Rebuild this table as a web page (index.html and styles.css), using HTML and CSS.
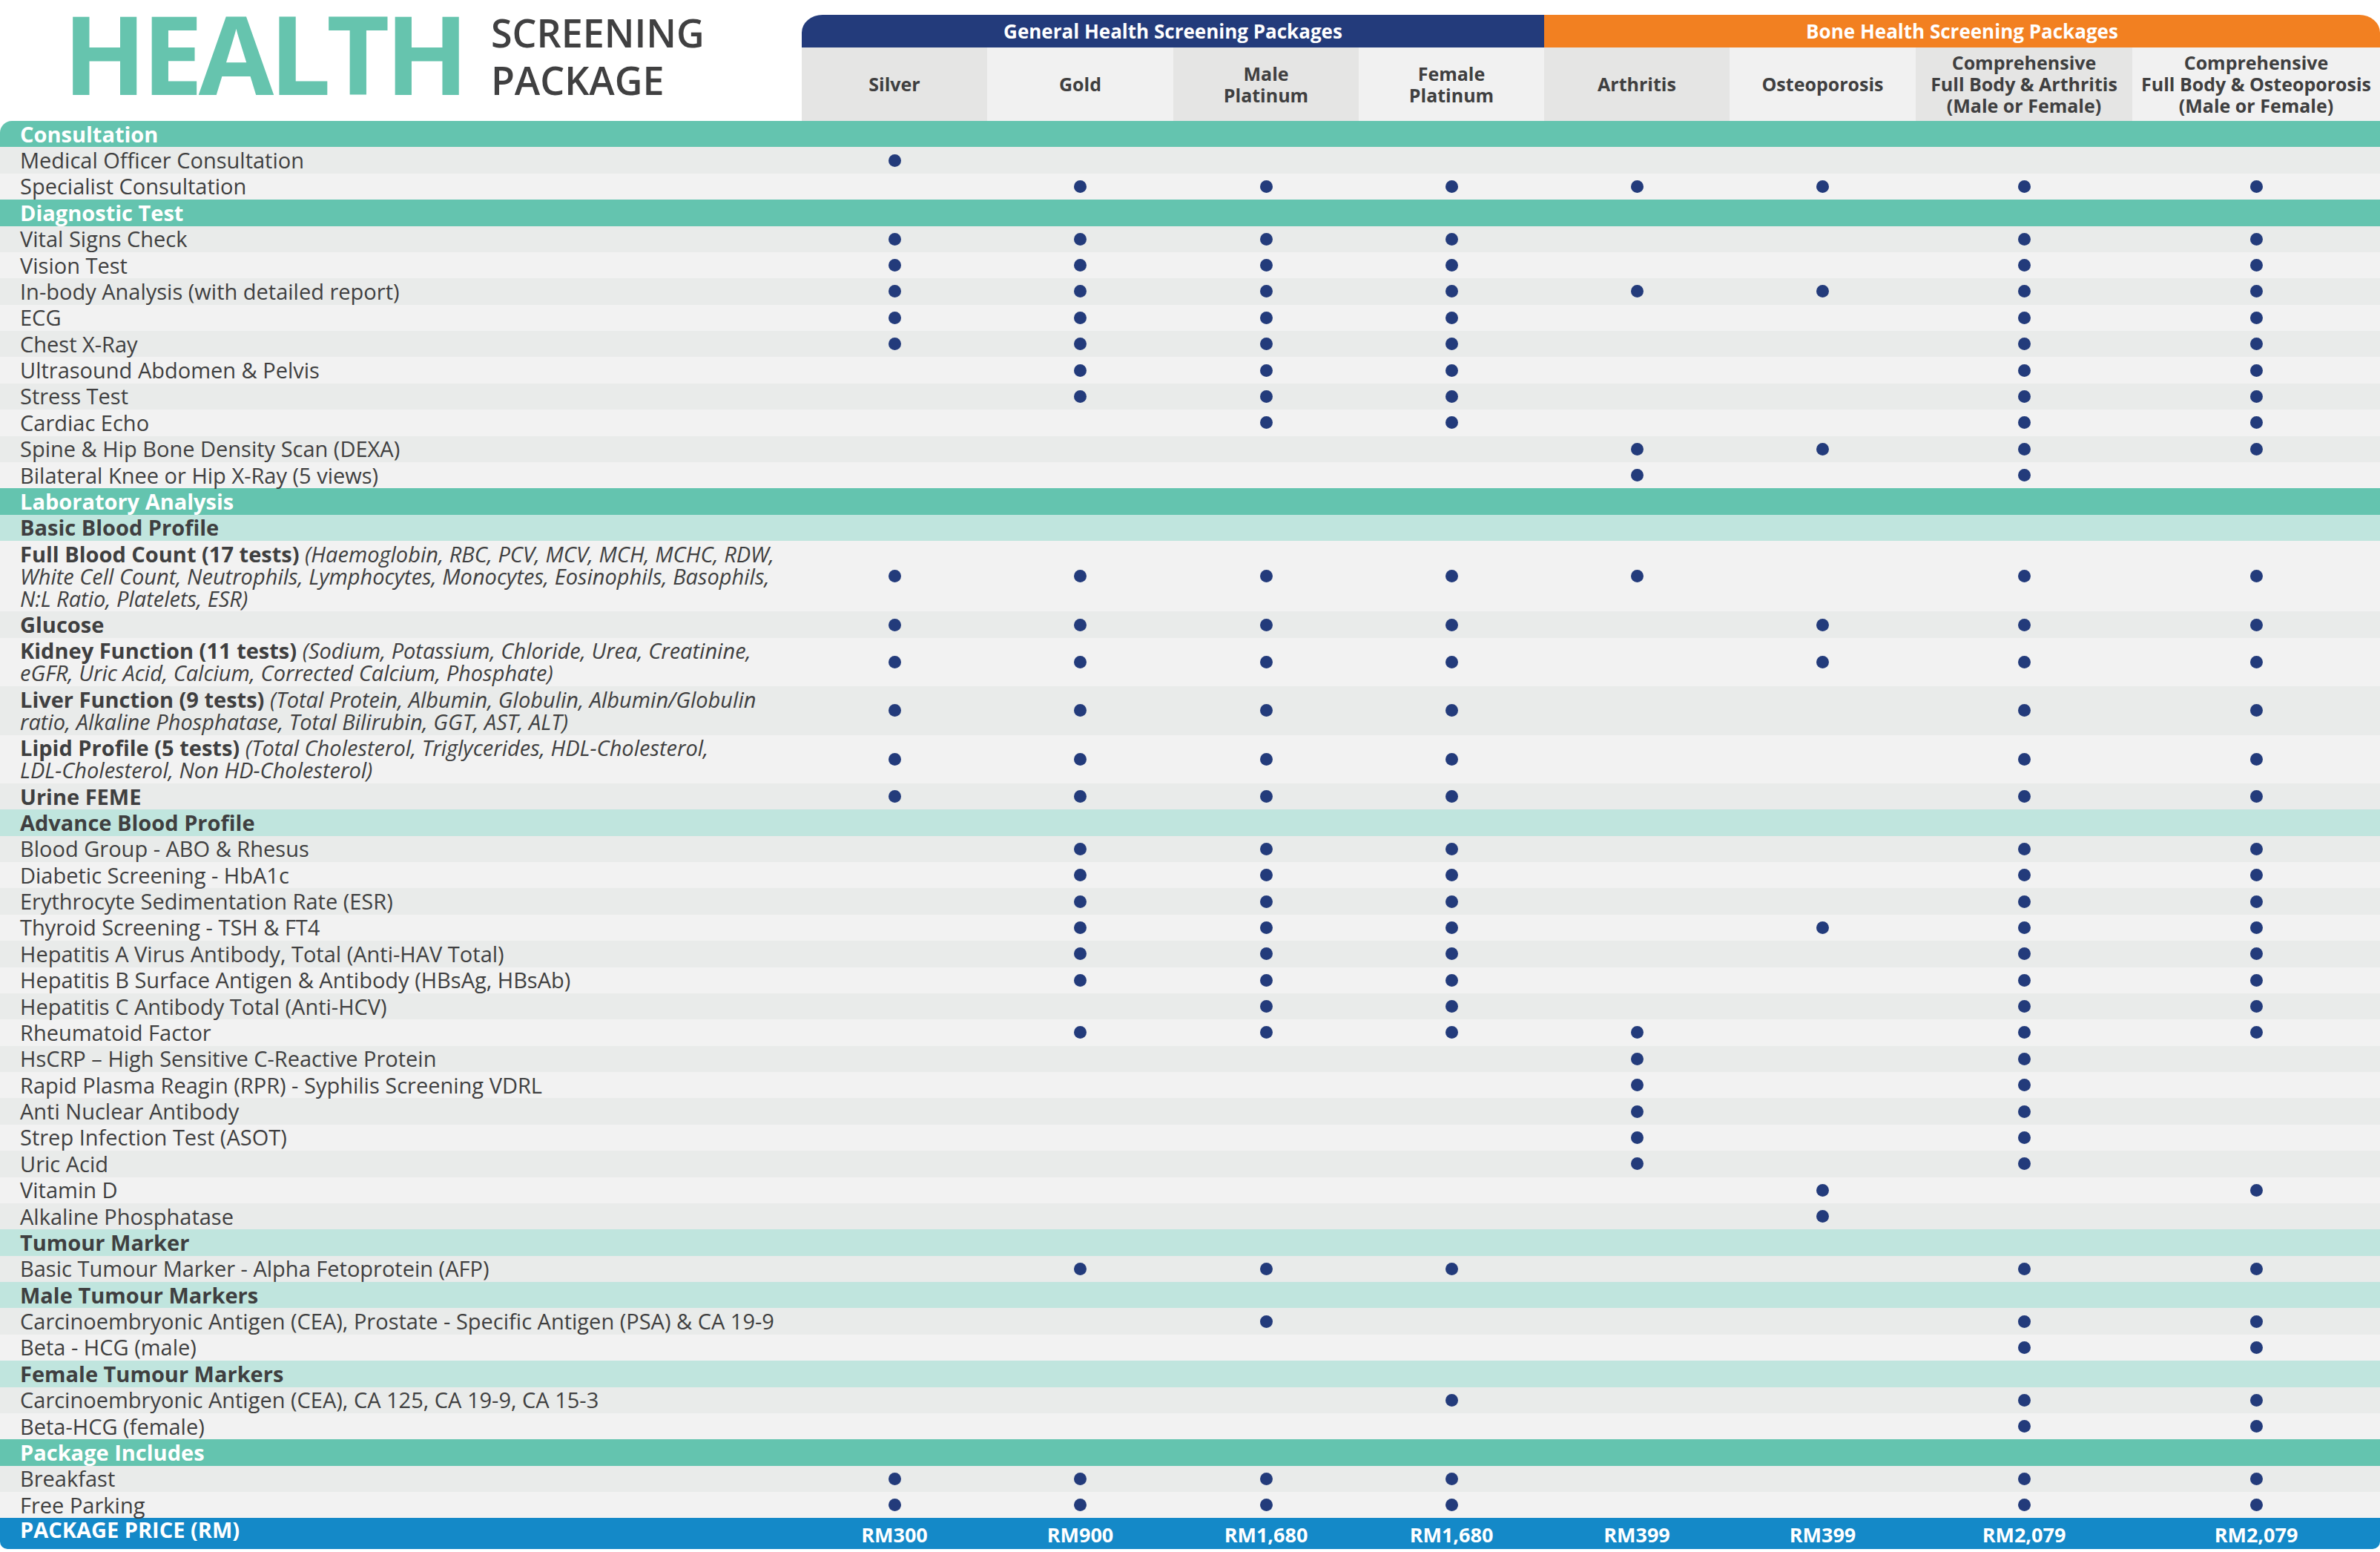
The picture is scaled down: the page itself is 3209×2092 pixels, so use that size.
FILE: index.html
```html
<!DOCTYPE html>
<html lang="en">
<head>
<meta charset="utf-8">
<title>Health Screening Package</title>
<link rel="stylesheet" href="styles.css">
</head>
<body>
<div class="sheet">
  <header class="top">
    <div class="title">
      <div class="big">HEALTH</div>
      <div class="small"><div>SCREENING</div><div>PACKAGE</div></div>
    </div>
    <div class="heads">
      <div class="grp general">General Health Screening Packages</div>
      <div class="grp bone">Bone Health Screening Packages</div>
      <div class="col g1">Silver</div>
      <div class="col g2">Gold</div>
      <div class="col g1"><div>Male</div><div>Platinum</div></div>
      <div class="col g2"><div>Female</div><div>Platinum</div></div>
      <div class="col g1">Arthritis</div>
      <div class="col g2">Osteoporosis</div>
      <div class="col g1"><div>Comprehensive</div><div>Full Body &amp; Arthritis</div><div>(Male or Female)</div></div>
      <div class="col g2"><div>Comprehensive</div><div>Full Body &amp; Osteoporosis</div><div>(Male or Female)</div></div>
    </div>
  </header>

  <div class="sec first">Consultation</div>
  <div class="row dk"><div class="lbl">Medical Officer Consultation</div><span><i></i></span><span></span><span></span><span></span><span></span><span></span><span></span><span></span></div>
  <div class="row lt"><div class="lbl">Specialist Consultation</div><span></span><span><i></i></span><span><i></i></span><span><i></i></span><span><i></i></span><span><i></i></span><span><i></i></span><span><i></i></span></div>

  <div class="sec">Diagnostic Test</div>
  <div class="row dk"><div class="lbl">Vital Signs Check</div><span><i></i></span><span><i></i></span><span><i></i></span><span><i></i></span><span></span><span></span><span><i></i></span><span><i></i></span></div>
  <div class="row lt"><div class="lbl">Vision Test</div><span><i></i></span><span><i></i></span><span><i></i></span><span><i></i></span><span></span><span></span><span><i></i></span><span><i></i></span></div>
  <div class="row dk"><div class="lbl">In-body Analysis (with detailed report)</div><span><i></i></span><span><i></i></span><span><i></i></span><span><i></i></span><span><i></i></span><span><i></i></span><span><i></i></span><span><i></i></span></div>
  <div class="row lt"><div class="lbl">ECG</div><span><i></i></span><span><i></i></span><span><i></i></span><span><i></i></span><span></span><span></span><span><i></i></span><span><i></i></span></div>
  <div class="row dk"><div class="lbl">Chest X-Ray</div><span><i></i></span><span><i></i></span><span><i></i></span><span><i></i></span><span></span><span></span><span><i></i></span><span><i></i></span></div>
  <div class="row lt"><div class="lbl">Ultrasound Abdomen &amp; Pelvis</div><span></span><span><i></i></span><span><i></i></span><span><i></i></span><span></span><span></span><span><i></i></span><span><i></i></span></div>
  <div class="row dk"><div class="lbl">Stress Test</div><span></span><span><i></i></span><span><i></i></span><span><i></i></span><span></span><span></span><span><i></i></span><span><i></i></span></div>
  <div class="row lt"><div class="lbl">Cardiac Echo</div><span></span><span></span><span><i></i></span><span><i></i></span><span></span><span></span><span><i></i></span><span><i></i></span></div>
  <div class="row dk"><div class="lbl">Spine &amp; Hip Bone Density Scan (DEXA)</div><span></span><span></span><span></span><span></span><span><i></i></span><span><i></i></span><span><i></i></span><span><i></i></span></div>
  <div class="row lt"><div class="lbl">Bilateral Knee or Hip X-Ray (5 views)</div><span></span><span></span><span></span><span></span><span><i></i></span><span></span><span><i></i></span><span></span></div>

  <div class="sec">Laboratory Analysis</div>
  <div class="sub">Basic Blood Profile</div>
  <div class="row lt"><div class="lbl"><div class="ln"><b>Full Blood Count (17 tests)</b> <em>(Haemoglobin, RBC, PCV, MCV, MCH, MCHC, RDW,</em></div><div class="ln"><em>White Cell Count, Neutrophils, Lymphocytes, Monocytes, Eosinophils, Basophils,</em></div><div class="ln"><em>N:L Ratio, Platelets, ESR)</em></div></div><span><i></i></span><span><i></i></span><span><i></i></span><span><i></i></span><span><i></i></span><span></span><span><i></i></span><span><i></i></span></div>
  <div class="row dk"><div class="lbl"><b>Glucose</b></div><span><i></i></span><span><i></i></span><span><i></i></span><span><i></i></span><span></span><span><i></i></span><span><i></i></span><span><i></i></span></div>
  <div class="row lt"><div class="lbl"><div class="ln"><b>Kidney Function (11 tests)</b> <em>(Sodium, Potassium, Chloride, Urea, Creatinine,</em></div><div class="ln"><em>eGFR, Uric Acid, Calcium, Corrected Calcium, Phosphate)</em></div></div><span><i></i></span><span><i></i></span><span><i></i></span><span><i></i></span><span></span><span><i></i></span><span><i></i></span><span><i></i></span></div>
  <div class="row dk"><div class="lbl"><div class="ln"><b>Liver Function (9 tests)</b> <em>(Total Protein, Albumin, Globulin, Albumin/Globulin</em></div><div class="ln"><em>ratio, Alkaline Phosphatase, Total Bilirubin, GGT, AST, ALT)</em></div></div><span><i></i></span><span><i></i></span><span><i></i></span><span><i></i></span><span></span><span></span><span><i></i></span><span><i></i></span></div>
  <div class="row lt"><div class="lbl"><div class="ln"><b>Lipid Profile (5 tests)</b> <em>(Total Cholesterol, Triglycerides, HDL-Cholesterol,</em></div><div class="ln"><em>LDL-Cholesterol, Non HD-Cholesterol)</em></div></div><span><i></i></span><span><i></i></span><span><i></i></span><span><i></i></span><span></span><span></span><span><i></i></span><span><i></i></span></div>
  <div class="row dk"><div class="lbl"><b>Urine FEME</b></div><span><i></i></span><span><i></i></span><span><i></i></span><span><i></i></span><span></span><span></span><span><i></i></span><span><i></i></span></div>

  <div class="sub">Advance Blood Profile</div>
  <div class="row dk"><div class="lbl">Blood Group - ABO &amp; Rhesus</div><span></span><span><i></i></span><span><i></i></span><span><i></i></span><span></span><span></span><span><i></i></span><span><i></i></span></div>
  <div class="row lt"><div class="lbl">Diabetic Screening - HbA1c</div><span></span><span><i></i></span><span><i></i></span><span><i></i></span><span></span><span></span><span><i></i></span><span><i></i></span></div>
  <div class="row dk"><div class="lbl">Erythrocyte Sedimentation Rate (ESR)</div><span></span><span><i></i></span><span><i></i></span><span><i></i></span><span></span><span></span><span><i></i></span><span><i></i></span></div>
  <div class="row lt"><div class="lbl">Thyroid Screening - TSH &amp; FT4</div><span></span><span><i></i></span><span><i></i></span><span><i></i></span><span></span><span><i></i></span><span><i></i></span><span><i></i></span></div>
  <div class="row dk"><div class="lbl">Hepatitis A Virus Antibody, Total (Anti-HAV Total)</div><span></span><span><i></i></span><span><i></i></span><span><i></i></span><span></span><span></span><span><i></i></span><span><i></i></span></div>
  <div class="row lt"><div class="lbl">Hepatitis B Surface Antigen &amp; Antibody (HBsAg, HBsAb)</div><span></span><span><i></i></span><span><i></i></span><span><i></i></span><span></span><span></span><span><i></i></span><span><i></i></span></div>
  <div class="row dk"><div class="lbl">Hepatitis C Antibody Total (Anti-HCV)</div><span></span><span></span><span><i></i></span><span><i></i></span><span></span><span></span><span><i></i></span><span><i></i></span></div>
  <div class="row lt"><div class="lbl">Rheumatoid Factor</div><span></span><span><i></i></span><span><i></i></span><span><i></i></span><span><i></i></span><span></span><span><i></i></span><span><i></i></span></div>
  <div class="row dk"><div class="lbl">HsCRP – High Sensitive C-Reactive Protein</div><span></span><span></span><span></span><span></span><span><i></i></span><span></span><span><i></i></span><span></span></div>
  <div class="row lt"><div class="lbl">Rapid Plasma Reagin (RPR) - Syphilis Screening VDRL</div><span></span><span></span><span></span><span></span><span><i></i></span><span></span><span><i></i></span><span></span></div>
  <div class="row dk"><div class="lbl">Anti Nuclear Antibody</div><span></span><span></span><span></span><span></span><span><i></i></span><span></span><span><i></i></span><span></span></div>
  <div class="row lt"><div class="lbl">Strep Infection Test (ASOT)</div><span></span><span></span><span></span><span></span><span><i></i></span><span></span><span><i></i></span><span></span></div>
  <div class="row dk"><div class="lbl">Uric Acid</div><span></span><span></span><span></span><span></span><span><i></i></span><span></span><span><i></i></span><span></span></div>
  <div class="row lt"><div class="lbl">Vitamin D</div><span></span><span></span><span></span><span></span><span></span><span><i></i></span><span></span><span><i></i></span></div>
  <div class="row dk"><div class="lbl">Alkaline Phosphatase</div><span></span><span></span><span></span><span></span><span></span><span><i></i></span><span></span><span></span></div>

  <div class="sub">Tumour Marker</div>
  <div class="row dk"><div class="lbl">Basic Tumour Marker - Alpha Fetoprotein (AFP)</div><span></span><span><i></i></span><span><i></i></span><span><i></i></span><span></span><span></span><span><i></i></span><span><i></i></span></div>

  <div class="sub">Male Tumour Markers</div>
  <div class="row dk"><div class="lbl">Carcinoembryonic Antigen (CEA), Prostate - Specific Antigen (PSA) &amp; CA 19-9</div><span></span><span></span><span><i></i></span><span></span><span></span><span></span><span><i></i></span><span><i></i></span></div>
  <div class="row lt"><div class="lbl">Beta - HCG (male)</div><span></span><span></span><span></span><span></span><span></span><span></span><span><i></i></span><span><i></i></span></div>

  <div class="sub">Female Tumour Markers</div>
  <div class="row dk"><div class="lbl">Carcinoembryonic Antigen (CEA), CA 125, CA 19-9, CA 15-3</div><span></span><span></span><span></span><span><i></i></span><span></span><span></span><span><i></i></span><span><i></i></span></div>
  <div class="row lt"><div class="lbl">Beta-HCG (female)</div><span></span><span></span><span></span><span></span><span></span><span></span><span><i></i></span><span><i></i></span></div>

  <div class="sec">Package Includes</div>
  <div class="row dk"><div class="lbl">Breakfast</div><span><i></i></span><span><i></i></span><span><i></i></span><span><i></i></span><span></span><span></span><span><i></i></span><span><i></i></span></div>
  <div class="row lt"><div class="lbl">Free Parking</div><span><i></i></span><span><i></i></span><span><i></i></span><span><i></i></span><span></span><span></span><span><i></i></span><span><i></i></span></div>

  <div class="price">
    <div class="plbl">PACKAGE PRICE (RM)</div>
    <div class="pv">RM300</div>
    <div class="pv">RM900</div>
    <div class="pv">RM1,680</div>
    <div class="pv">RM1,680</div>
    <div class="pv">RM399</div>
    <div class="pv">RM399</div>
    <div class="pv">RM2,079</div>
    <div class="pv">RM2,079</div>
  </div>
</div>
</body>
</html>
```
FILE: styles.css
```css
html, body {
  margin: 0;
  padding: 0;
  background: #ffffff;
}

body {
  font-family: "Open Sans", "Liberation Sans", sans-serif;
  color: #3f3f40;
}

.sheet {
  width: 3209px;
}

/* ---------- header ---------- */
.top {
  display: grid;
  grid-template-columns: 1081px 2128px;
  height: 163px;
}

.title {
  display: flex;
  align-items: flex-start;
  padding-left: 85px;
}

.big {
  font-size: 147px;
  line-height: 142px;
  font-weight: 700;
  color: #66c4ae;
  letter-spacing: -6px;
}

.small {
  font-size: 52px;
  line-height: 64px;
  font-weight: 600;
  color: #404041;
  margin-top: 12px;
  margin-left: 36px;
}

.heads {
  display: grid;
  grid-template-columns: 250px 251px 250px 250px 250px 251px 292px 334px;
  grid-template-rows: 44px 99px;
  margin-top: 20px;
}

.grp {
  display: flex;
  align-items: center;
  justify-content: center;
  color: #ffffff;
  font-weight: 700;
  font-size: 26px;
}

.grp.general {
  grid-column: 1 / 5;
  background: #233b7b;
  border-top-left-radius: 28px 24px;
}

.grp.bone {
  grid-column: 5 / 9;
  background: #f28021;
  border-top-right-radius: 28px 24px;
}

.col {
  display: flex;
  flex-direction: column;
  align-items: center;
  justify-content: center;
  text-align: center;
  font-weight: 700;
  font-size: 25px;
  line-height: 29px;
  color: #3f3f40;
}

.col.g1 { background: #e5e5e4; }
.col.g2 { background: #f1f1f1; }

/* ---------- table rows ---------- */
.row,
.price {
  display: grid;
  grid-template-columns: 1081px 250px 251px 250px 250px 250px 251px 292px 334px;
}

.row.dk { background: #e9ebea; }
.row.lt { background: #f2f2f2; }

.lbl {
  padding: 2.7px 0 2.7px 27px;
  font-size: 29px;
  line-height: 30px;
  white-space: nowrap;
}

.ln { display: block; }
.lbl b { font-weight: 700; }
.lbl em { font-style: italic; }

.row span {
  display: flex;
  align-items: center;
  justify-content: center;
}

.row i {
  display: block;
  width: 17px;
  height: 17px;
  border-radius: 50%;
  background: #233b7b;
}

.sec,
.sub {
  padding: 2.7px 27px;
  font-size: 29px;
  line-height: 30px;
  font-weight: 700;
}

.sec {
  background: #64c4af;
  color: #ffffff;
}

.sec.first {
  border-top-left-radius: 16px;
}

.sub {
  background: #c0e5de;
  color: #3f3f40;
}

/* ---------- price ---------- */
.price {
  background: #1489c8;
  color: #ffffff;
  font-weight: 700;
  height: 42px;
  border-radius: 0 0 10px 10px;
}

.plbl {
  padding: 1px 0 0 27px;
  font-size: 29px;
  line-height: 30px;
}

.pv {
  padding-top: 8px;
  font-size: 27px;
  line-height: 30px;
  text-align: center;
}
```
